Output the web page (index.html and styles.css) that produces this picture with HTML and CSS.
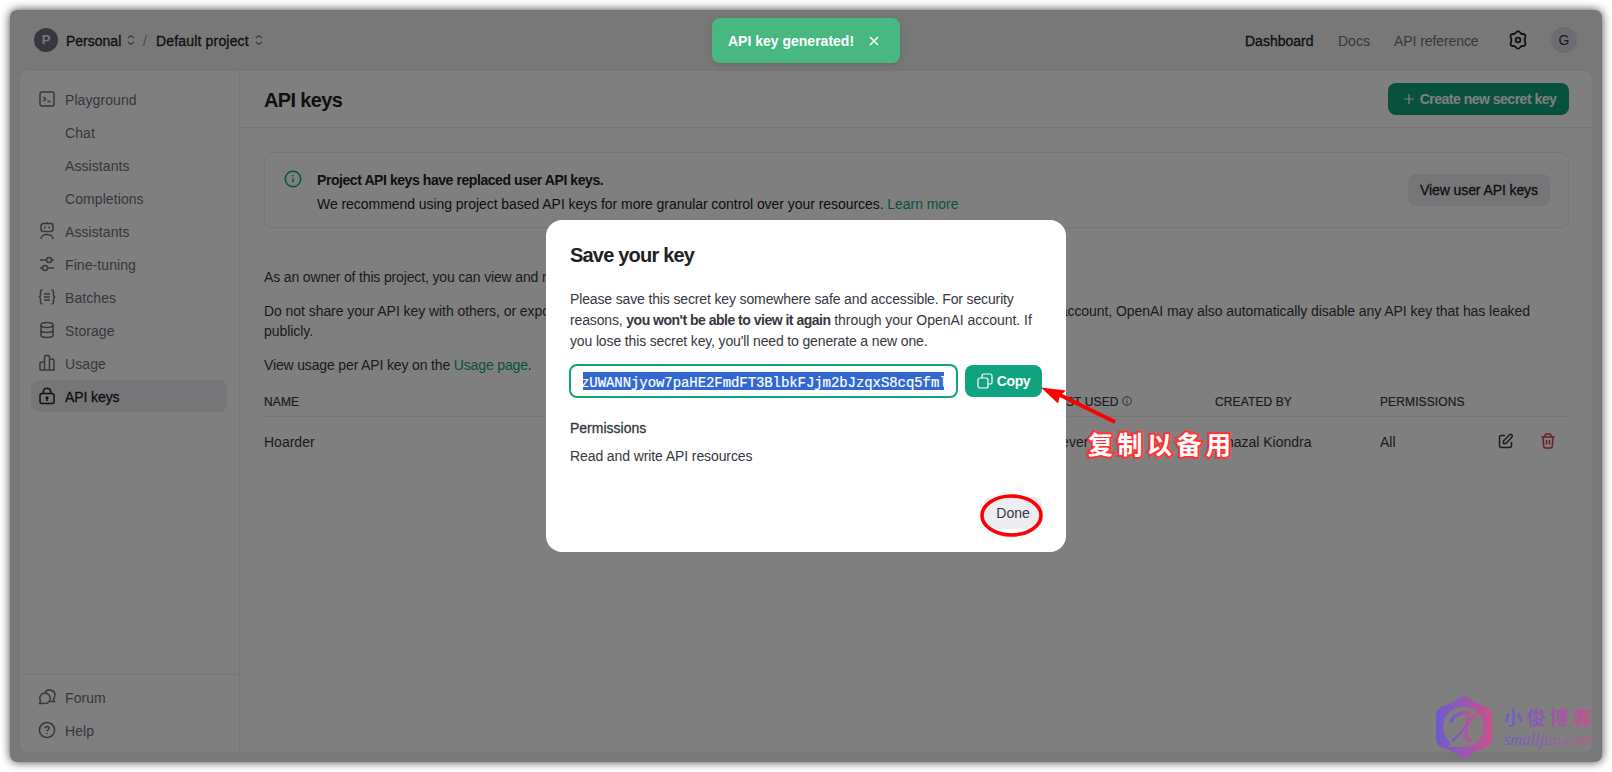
FILE: index.html
```html
<!DOCTYPE html>
<html lang="en">
<head>
  <meta charset="UTF-8" />
  <meta name="viewport" content="width=device-width, initial-scale=1.0" />
  <title>API keys</title>
  <link rel="stylesheet" href="styles.css">
</head>
<body>
  <div class="window">
    <header>
      <span class="avatar org">P</span>
      <span class="crumb personal">Personal</span>
      <svg class="updown" width="10" height="12" viewBox="0 0 10 12"><path d="M2 4l3-2.500 3 2.500M2 8l3 2.500 3-2.500"/></svg>
      <span class="slash">/</span>
      <span class="crumb project">Default project</span>
      <svg class="updown" width="10" height="12" viewBox="0 0 10 12"><path d="M2 4l3-2.500 3 2.500M2 8l3 2.500 3-2.500"/></svg>
      <nav>
        <a class="current">Dashboard</a>
        <a class="docs">Docs</a>
        <a class="reference">API reference</a>
        <svg class="gear" width="18" height="20" viewBox="0 0 18 20"><path d="M7 2.500Q9 .2 11 2.500L12.300 3.800L14.200 4Q17 4.400 16.300 7.200L15.800 8.800Q15.500 10 15.800 11.200L16.300 12.800Q17 15.600 14.200 16L12.300 16.200L11 17.500Q9 19.800 7 17.500L5.700 16.200L3.800 16Q1 15.600 1.700 12.800L2.200 11.200Q2.500 10 2.200 8.800L1.700 7.200Q1 4.400 3.800 4L5.700 3.800Z"/><circle cx="9" cy="10" r="2.300"/></svg>
        <span class="avatar user">G</span>
      </nav>
    </header>

    <div class="panel">
      <aside>
        <ul class="menu">
          <li><svg viewBox="0 0 18 18"><rect x="2" y="2" width="14" height="14" rx="2"/><path d="M5.500 7l2 2-2 2M9.500 11.500h3"/></svg>Playground</li>
          <li class="sub">Chat</li>
          <li class="sub">Assistants</li>
          <li class="sub">Completions</li>
          <li><svg viewBox="0 0 18 18"><rect x="3" y="1.500" width="12" height="8" rx="2.500"/><path d="M9 0v1.500M7 4.500v2M11 4.500v2M3 17c0-6 12-6 12 0"/></svg>Assistants</li>
          <li><svg viewBox="0 0 18 18"><path d="M2 5h6.500M13.500 5H16M2 13h2.500M9.500 13H16"/><circle cx="11" cy="5" r="2.500"/><circle cx="7" cy="13" r="2.500"/></svg>Fine-tuning</li>
          <li><svg viewBox="0 0 18 18"><path d="M4.500 2C2 2 2.500 4 2.500 6.500Q2.500 9 .7 9 2.500 9 2.500 11.500C2.500 14 2 16 4.500 16M13.500 2C16 2 15.500 4 15.500 6.500Q15.500 9 17.300 9 15.500 9 15.500 11.500C15.500 14 16 16 13.500 16M6 6h6M6 9h6M6 12h6"/></svg>Batches</li>
          <li><svg viewBox="0 0 18 18"><ellipse cx="9" cy="4" rx="6" ry="2.500"/><path d="M3 4v10c0 3.300 12 3.300 12 0V4M3 9c0 3.300 12 3.300 12 0"/></svg>Storage</li>
          <li><svg viewBox="0 0 18 18"><path d="M6.500 16V3q0-1.500 1.500-1.500h2q1.500 0 1.500 1.500v13M6.500 8H4Q2 8 2 10v6h14V7q0-2-2-2h-2.500"/></svg>Usage</li>
          <li class="active"><svg viewBox="0 0 18 18"><rect x="2" y="6.500" width="14" height="10" rx="2"/><path d="M5 6.500C5-.5 13-.5 13 6.500M9 11v3"/><circle cx="9" cy="10.700" r=".8"/></svg>API keys</li>
        </ul>
        <ul class="menu bottom">
          <li><svg viewBox="0 0 18 18"><path d="M1.500 15.500h5.500a5.200 5.200 0 1 0-4.500-2.600zM7 4.500c3-5 12-2 9.500 4.500l-1 2.300 1 2.200h-4.300"/></svg>Forum</li>
          <li><svg viewBox="0 0 18 18"><circle cx="9" cy="9" r="7.600"/><path d="M7 7.300c.2-2.500 4-2.300 4 0 0 1.500-2 1.500-2 3M9 12v1"/></svg>Help</li>
        </ul>
      </aside>

      <main>
        <div class="title-bar">
          <h1>API keys</h1>
          <button class="btn green create"><svg width="12" height="12" viewBox="0 0 12 12"><path d="M6 1v10M1 6h10"/></svg>Create new secret key</button>
        </div>
        <div class="content">
          <div class="notice">
            <svg width="18" height="18" viewBox="0 0 18 18"><circle cx="9" cy="9" r="7.700"/><path d="M9 8.300v4M9 5v1.600"/></svg>
            <div class="notice-text">
              <b>Project API keys have replaced user API keys.</b>
              <p>We recommend using project based API keys for more granular control over your resources. <a>Learn more</a></p>
            </div>
            <button class="btn gray view">View user API keys</button>
          </div>

          <div class="text">
            <p>As an owner of this project, you can view and manage all API keys in this project.</p>
            <p class="warn">Do not share your API key with others, or expose it in the browser or other client-side code. In order to protect the security of your account, OpenAI may also automatically disable any API key that has leaked<br>publicly.</p>
            <p>View usage per API key on the <a>Usage page</a>.</p>
          </div>

          <div class="row head">
            <span>NAME</span>
            <span>LAST USED <svg width="10" height="10" viewBox="0 0 10 10"><circle cx="5" cy="5" r="4.300"/><path d="M5 4.500v3M5 2.500v1"/></svg></span>
            <span>CREATED BY</span>
            <span>PERMISSIONS</span>
          </div>
          <div class="row">
            <span>Hoarder</span>
            <span>Never</span>
            <span>Ghazal Kiondra</span>
            <span>All</span>
            <svg class="edit" width="16" height="16" viewBox="0 0 16 16"><path d="M7 2.500H3.500q-2 0-2 2v8q0 2 2 2h8q2 0 2-2V9M5.500 10.500V8l6-6.200q1.200-1 2.200 0 1.200 1.200 0 2.400L8 10.500z"/></svg>
            <svg class="trash" width="16" height="16" viewBox="0 0 16 16"><path d="M1.500 4h13M5 4V2.500q0-1.500 1.500-1.500h3Q11 1 11 2.500V4M3 4l.7 9q.2 2 2 2h4.600q1.800 0 2-2L13 4M6.500 7v4.500M9.500 7v4.500"/></svg>
          </div>
        </div>
      </main>
    </div>

    <div class="overlay"></div>

    <div class="toast">API key generated!<svg width="10" height="10" viewBox="0 0 10 10"><path d="M1 1l8 8M9 1L1 9"/></svg></div>

    <div class="modal">
      <h2>Save your key</h2>
      <p class="explain">Please save this secret key somewhere safe and accessible. For security<br>reasons, <b>you won't be able to view it again</b> <span class="after">through your OpenAI account. If</span><br>you lose this secret key, you'll need to generate a new one.</p>
      <div class="key-row">
        <div class="key"><span>zUWANNjyow7paHE2FmdFT3BlbkFJjm2bJzqxS8cq5fml</span></div>
        <button class="btn green copy"><svg width="16" height="16" viewBox="0 0 16 16"><rect x="1" y="5" width="10" height="10" rx="2"/><path d="M5 5V3q0-2 2-2h6q2 0 2 2v6q0 2-2 2h-2"/></svg>Copy</button>
      </div>
      <h3>Permissions</h3>
      <p class="scope">Read and write API resources</p>
      <button class="btn done">Done</button>
    </div>
  </div>

  <!-- red hand-drawn notes on top -->
  <svg class="marks" width="1612" height="772" viewBox="0 0 1612 772">
    <path d="M1115 422L1058 394" stroke="#f00" stroke-width="4"/>
    <path d="M1041 387.500L1066 390.500L1060 395.500L1058 403.500Z" fill="#f00" stroke="none"/>
    <ellipse cx="1011.500" cy="515.500" rx="29.500" ry="19.500" fill="none" stroke="#f00" stroke-width="3.600"/>
  </svg>
  <div class="note">复制以备用</div>

  <div class="watermark">
    <svg width="56" height="62" viewBox="0 0 56 62">
      <defs><linearGradient id="wm"><stop offset="0" stop-color="#6b5bd0"/><stop offset="1" stop-color="#c9518c"/></linearGradient></defs>
      <path fill="url(#wm)" fill-rule="evenodd" d="M23 2q5-4 10 0l6 4 12 5q5 3 5 8v24q0 5-5 8l-12 5-6 4q-5 4-10 0l-6-4-12-5q-5-3-5-8V19q0-5 5-8l12-5zM28 51A20.300 20.300 0 1 0 13 45Q16 48 12 51z"/>
      <path fill="none" stroke="url(#wm)" stroke-width="3.500" d="M15 27c1-7 9-11 18-10-3 8-3 17-3 22 0 5 2 6 6 5"/>
      <path fill="none" stroke="url(#wm)" stroke-width="2.500" d="M41 17C32 26 24 41 16 45"/>
    </svg>
    <div class="wm-text"><span class="wm-cn">小俊博客</span><span class="wm-url">smalljun.com</span></div>
  </div>
</body>
</html>
```
FILE: styles.css
```css
* {
  box-sizing: border-box;
}
body {
  margin: 0;
  padding: 10px;
  width: 1612px;
  height: 772px;
  overflow: hidden;
  position: relative;
  background: #fff;
  color: #353740;
  font: 14px/20px "Liberation Sans", Arial, sans-serif;
}
h1, h2, h3, p, ul {
  margin: 0;
  padding: 0;
}
svg {
  fill: none;
  stroke: currentColor;
  stroke-width: 1.5;
  flex: none;
}
.window {
  position: relative;
  width: 1592px;
  height: 752px;
  padding: 0 9px 9px;
  border-radius: 7px;
  background: #f1f1f1;
  box-shadow: 0 0 10px rgba(0, 0, 0, 0.75);
}
header {
  display: flex;
  align-items: center;
  height: 60px;
  padding: 0 16px 0 15px;
  color: #202123;
}
.avatar {
  display: flex;
  align-items: center;
  justify-content: center;
  border-radius: 50%;
}
.org {
  width: 24px;
  height: 24px;
  margin-right: 8px;
  background: #6e6e80;
  color: #ececf1;
  font-size: 13px;
  font-weight: bold;
}
.crumb, .current, .active, .view, h3 {
  -webkit-text-stroke: 0.3px currentColor;
}
.crumb {
  padding-top: 2px;
  white-space: nowrap;
}
.personal {
  width: 55px;
}
.updown {
  margin-left: 5px;
  color: #6e6e80;
  stroke-width: 1.1;
}
.slash {
  margin: 2px 9px 0 7px;
  color: #8e8ea0;
}
.project {
  width: 93px;
  letter-spacing: 0.18px;
}
nav {
  display: flex;
  align-items: center;
  margin-left: auto;
  color: #6e6e80;
  white-space: nowrap;
}
nav a {
  padding-top: 2px;
}
.current {
  width: 68px;
  margin-right: 25px;
  color: #202123;
}
.docs {
  width: 31px;
  margin-right: 25px;
}
.reference {
  width: 84px;
  margin-right: 31px;
  letter-spacing: -0.08px;
}
.gear {
  margin-right: 24px;
  color: #202123;
  stroke-width: 1.8;
}
.user {
  width: 26px;
  height: 26px;
  background: #d9d9e3;
  color: #353740;
}
.panel {
  display: flex;
  height: 683px;
  border: 1px solid #ececf1;
  border-radius: 8px;
  background: #fff;
}
aside {
  display: flex;
  flex-direction: column;
  justify-content: space-between;
  width: 220px;
  border-right: 1px solid #ececf1;
  color: #6e6e80;
}
.menu {
  display: flex;
  flex-direction: column;
  gap: 1px;
  padding: 12px 12px 0 11px;
  list-style: none;
  letter-spacing: 0.08px;
}
.menu li {
  display: flex;
  align-items: center;
  gap: 9px;
  height: 32px;
  padding: 1px 0 0 7px;
  border-radius: 8px;
}
.menu svg {
  width: 18px;
  height: 18px;
  margin-top: -2px;
}
.menu .sub {
  padding-left: 34px;
}
.menu .active {
  background: #ececf1;
  color: #202123;
  letter-spacing: -0.1px;
}
.menu.bottom {
  height: 78px;
  padding-top: 6px;
  border-top: 1px solid #ececf1;
}
main {
  flex: 1;
}
.title-bar {
  display: flex;
  align-items: center;
  justify-content: space-between;
  height: 57px;
  padding: 0 23px 0 24px;
  border-bottom: 1px solid #ececf1;
}
h1, h2 {
  color: #202123;
  font-size: 20px;
  line-height: 28px;
  letter-spacing: -0.8px;
}
h1 {
  padding-top: 1px;
  letter-spacing: -0.65px;
}
.btn {
  display: flex;
  align-items: center;
  justify-content: center;
  height: 32px;
  padding: 0;
  border: none;
  border-radius: 8px;
  color: #353740;
  font: inherit;
  white-space: nowrap;
}
.green {
  background: #10a37f;
  color: #fff;
  font-weight: bold;
}
.create {
  width: 181px;
  gap: 5px;
  padding-left: 2px;
  letter-spacing: -0.5px;
}
.create svg {
  stroke-width: 1.2;
}
.gray {
  background: #ececf1;
}
.view {
  width: 142px;
  color: #202123;
  letter-spacing: -0.1px;
}
.content {
  padding: 24px 23px 0 24px;
}
.notice {
  display: flex;
  align-items: center;
  height: 76px;
  padding: 0 18px 0 19px;
  border: 1px solid #ececf1;
  border-radius: 8px;
  color: #202123;
}
.notice > svg {
  margin: -23px 15px 0 0;
  color: #10a37f;
}
.notice-text {
  flex: 1;
  padding-top: 4px;
  line-height: 24px;
  letter-spacing: -0.05px;
}
.notice-text b {
  letter-spacing: -0.43px;
}
.notice .view {
  margin-top: -1px;
}
a {
  text-decoration: none;
}
main a {
  color: #10a37f;
}
.text {
  display: flex;
  flex-direction: column;
  gap: 14px;
  padding-top: 39px;
  letter-spacing: -0.15px;
}
.warn {
  white-space: nowrap;
  letter-spacing: -0.06px;
}
.row {
  display: grid;
  grid-template-columns: 787px 164px 165px 118px 42px 28px;
  align-items: center;
  height: 49px;
}
.head {
  height: 42px;
  padding-top: 12px;
  border-bottom: 1px solid #ececf1;
  font-size: 12px;
  letter-spacing: 0.12px;
  -webkit-text-stroke: 0.2px currentColor;
}
.head svg {
  stroke-width: 0.8;
}
.edit {
  color: #353740;
  margin-top: -2px;
}
.trash {
  color: #d63a4a;
  margin-top: -2px;
}
.overlay {
  position: absolute;
  inset: 0;
  border-radius: 7px;
  background: rgba(0, 0, 0, 0.5);
}
.toast {
  position: absolute;
  left: 702px;
  top: 8px;
  display: flex;
  align-items: center;
  gap: 15px;
  width: 188px;
  height: 45px;
  padding-left: 16px;
  border-radius: 8px;
  background: #48b883;
  color: #fff;
  font-weight: bold;
  box-shadow: 0 2px 8px rgba(0, 0, 0, 0.12);
}
.modal {
  position: absolute;
  left: 536px;
  top: 210px;
  width: 520px;
  height: 332px;
  padding: 21px 24px 24px;
  border-radius: 16px;
  background: #fff;
}
.explain {
  margin-top: 20px;
  line-height: 21px;
  letter-spacing: -0.14px;
  white-space: nowrap;
}
.explain b {
  letter-spacing: -0.5px;
}
.after {
  letter-spacing: -0.03px;
}
.key-row {
  display: flex;
  align-items: center;
  gap: 7px;
  margin: 12px 0 20px -1px;
}
.key {
  width: 389px;
  height: 34px;
  padding: 6px 12px;
  border: 2px solid #10a37f;
  border-radius: 8px;
}
.key span {
  display: block;
  height: 18px;
  overflow: hidden;
  background: #3367d1;
  color: #fff;
  font: 14px/22px "Liberation Mono", monospace;
  letter-spacing: -0.07px;
  text-indent: -2px;
  -webkit-text-stroke: 0.2px currentColor;
}
.copy {
  width: 77px;
  gap: 4px;
  letter-spacing: -0.4px;
}
.copy svg {
  stroke-width: 1.2;
}
h3 {
  font-size: 14px;
  font-weight: normal;
}
.scope {
  margin-top: 8px;
  letter-spacing: -0.1px;
}
.done {
  width: 58px;
  margin: 31px 0 0 auto;
  background: #ececf1;
}
.marks {
  position: absolute;
  left: 0;
  top: 0;
}
.note {
  position: absolute;
  left: 1088px;
  top: 426px;
  color: #fff;
  font: bold 25px/34px "Noto Sans CJK SC", sans-serif;
  letter-spacing: 4.500px;
  paint-order: stroke fill;
  -webkit-text-stroke: 4px #f33;
}
.watermark {
  position: absolute;
  left: 1436px;
  top: 696px;
  display: flex;
  gap: 12px;
}
.watermark svg {
  stroke: none;
}
.wm-text {
  display: flex;
  flex-direction: column;
  padding-top: 8px;
}
.wm-cn, .wm-url {
  background: linear-gradient(90deg, #6b5bd0, #c9518c);
  background-clip: text;
  -webkit-background-clip: text;
  color: transparent;
}
.wm-cn {
  font: bold 19px/26px "Noto Sans CJK SC", sans-serif;
  letter-spacing: 3.800px;
}
.wm-url {
  font: italic 16.500px/20px "Liberation Serif", serif;
}
```
